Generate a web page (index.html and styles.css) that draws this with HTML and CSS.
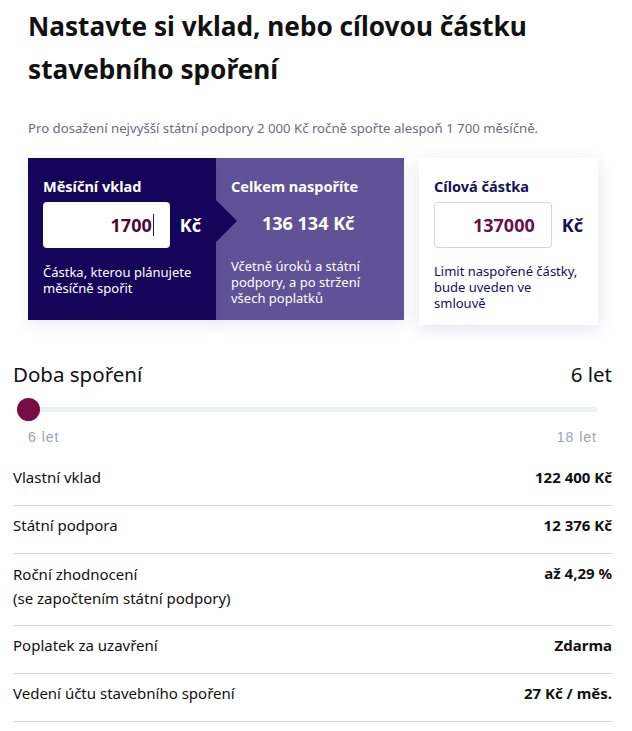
FILE: index.html
```
<!DOCTYPE html>
<html lang="cs">
<head>
<meta charset="utf-8">
<link rel="stylesheet" href="styles.css">
</head>
<body>
<div class="page">
  <div class="intro">
    <h1 class="title">Nastavte si vklad, nebo cílovou částku stavebního spoření</h1>
    <p class="note">Pro dosažení nejvyšší státní podpory 2 000 Kč ročně spořte alespoň 1 700 měsíčně.</p>
    <div class="cards">
      <div class="card card-dark">
        <div class="card-label">Měsíční vklad</div>
        <div class="field-row">
          <div class="field field-dark"><span class="value">1700</span><span class="caret"></span></div>
          <span class="unit">Kč</span>
        </div>
        <div class="help">Částka, kterou plánujete měsíčně spořit</div>
        <span class="arrow"></span>
      </div>
      <div class="card card-purple">
        <div class="card-label">Celkem naspoříte</div>
        <div class="total">136 134 Kč</div>
        <div class="help">Včetně úroků a státní podpory, a po stržení všech poplatků</div>
      </div>
      <div class="card card-white">
        <div class="card-label">Cílová částka</div>
        <div class="field-row">
          <div class="field field-light"><span class="value">137000</span></div>
          <span class="unit">Kč</span>
        </div>
        <div class="help help-narrow">Limit naspořené částky, bude uveden ve smlouvě</div>
      </div>
    </div>
  </div>

  <div class="term">
    <div class="term-head">
      <span>Doba spoření</span>
      <span>6 let</span>
    </div>
    <div class="slider">
      <div class="track"></div>
      <span class="thumb"></span>
    </div>
    <div class="term-scale">
      <span>6 let</span>
      <span>18 let</span>
    </div>
  </div>

  <div class="rows">
    <div class="row"><span>Vlastní vklad</span><strong>122 400 Kč</strong></div>
    <div class="row"><span>Státní podpora</span><strong>12 376 Kč</strong></div>
    <div class="row row-tall"><span>Roční zhodnocení<br>(se započtením státní podpory)</span><strong>až 4,29 %</strong></div>
    <div class="row"><span>Poplatek za uzavření</span><strong>Zdarma</strong></div>
    <div class="row"><span>Vedení účtu stavebního spoření</span><strong>27 Kč / měs.</strong></div>
  </div>
</div>
</body>
</html>
```
FILE: styles.css
```
* { box-sizing: border-box; }
body {
  margin: 0;
  background: #fff;
  font-family: "Noto Sans", "Open Sans", sans-serif;
  color: #111;
}
.page {
  padding: 0 20px 0 13px;
}
.intro {
  padding-left: 15px;
}
.title {
  margin: 0;
  padding-top: 5px;
  font-size: 26.2px;
  line-height: 43px;
  font-weight: 700;
  color: #111;
  width: 520px;
}
.note {
  margin: 28px 0 0;
  font-size: 13.2px;
  line-height: 18px;
  color: #6c6c7a;
}
.cards {
  display: flex;
  margin-top: 21px;
  align-items: flex-start;
}
.card {
  position: relative;
  padding: 18px 15px 0;
}
.card-dark {
  width: 188px;
  height: 162px;
  background: #14055a;
  color: #fff;
  box-shadow: 0 6px 14px rgba(40, 30, 90, 0.08);
  z-index: 2;
}
.card-purple {
  width: 188px;
  height: 162px;
  background: #605297;
  color: #fff;
  box-shadow: 0 6px 14px rgba(40, 30, 90, 0.08);
}
.card-white {
  width: 179px;
  height: 167px;
  margin-left: 15px;
  background: #fff;
  color: #14105a;
  box-shadow: 0 4px 16px rgba(40, 30, 110, 0.12);
}
.card-label {
  font-size: 14.5px;
  font-weight: 700;
  line-height: 20px;
}
.field-row {
  display: flex;
  align-items: center;
  margin-top: 6px;
}
.field {
  height: 46px;
  border-radius: 4px;
  display: flex;
  align-items: center;
  justify-content: flex-end;
  font-size: 18px;
  font-weight: 700;
}
.field-dark {
  width: 127px;
  background: #fff;
  color: #4d0a2e;
  padding-right: 16px;
}
.field-light {
  width: 119px;
  background: #fff;
  border: 1px solid #d6d2e4;
  color: #6b0f45;
  padding-right: 16px;
}
.caret {
  display: inline-block;
  width: 1px;
  height: 22px;
  background: #4d0a2e;
  margin-left: 1px;
}
.unit {
  font-size: 18px;
  font-weight: 700;
  margin-left: 10px;
}
.total {
  font-size: 18px;
  font-weight: 700;
  margin-top: 15px;
  padding-left: 31px;
  line-height: 24px;
}
.help {
  margin-top: 16px;
  font-size: 13px;
  line-height: 16px;
}
.card-purple .help { margin-top: 23px; }
.card-white .help { margin-top: 15px; }
.help-narrow { max-width: 147px; }
.arrow {
  position: absolute;
  left: 100%;
  top: 42px;
  width: 0;
  height: 0;
  border-top: 21.5px solid transparent;
  border-bottom: 21.5px solid transparent;
  border-left: 21px solid #14055a;
}
.term {
  margin-top: 36px;
}
.term-head {
  display: flex;
  justify-content: space-between;
  font-size: 20.5px;
  line-height: 26px;
  color: #111;
}
.slider {
  position: relative;
  margin: 10px 15px 0;
  height: 24px;
}
.track {
  position: absolute;
  left: 0;
  right: 0;
  top: 10px;
  height: 5px;
  border-radius: 3px;
  background: #eef0f4;
}
.thumb {
  position: absolute;
  left: -11px;
  top: 1px;
  width: 23px;
  height: 23px;
  border-radius: 50%;
  background: #7a0c45;
}
.term-scale {
  display: flex;
  justify-content: space-between;
  margin: 8px 15px 0;
  font-family: "Liberation Sans", Arial, sans-serif;
  font-size: 14px;
  letter-spacing: 1px;
  line-height: 16px;
  color: #9aa2b6;
}
.rows {
  margin-top: 13px;
}
.row {
  display: flex;
  justify-content: space-between;
  align-items: flex-start;
  padding: 10px 0 18px;
  border-bottom: 1px solid #d4d4de;
  font-size: 15px;
  line-height: 19px;
}
.row-tall span {
  line-height: 24px;
  margin: -2px 0 -3px;
}
.row strong { font-weight: 700; }
```
